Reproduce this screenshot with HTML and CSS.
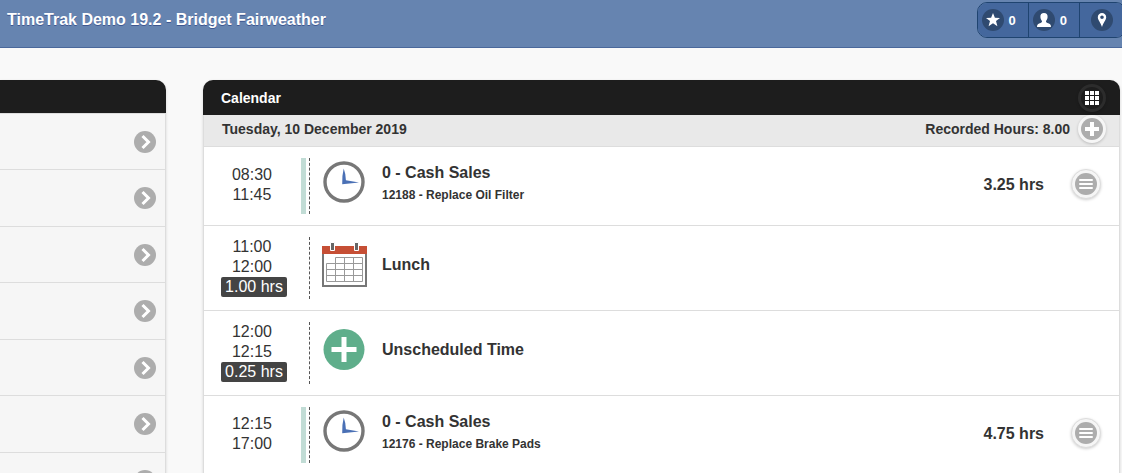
FILE: index.html
```html
<!DOCTYPE html>
<html lang="en">
<head>
    <meta charset="UTF-8">
    <meta name="viewport" content="width=device-width, initial-scale=1.0">
    <title>TimeTrak Demo 19.2</title>
    <link rel="stylesheet" href="styles.css">
</head>
<body>

<header class="topbar">
    <h1>TimeTrak Demo 19.2 - Bridget Fairweather</h1>
    <div class="top-buttons">
        <button type="button">
            <svg class="disc" viewBox="0 0 22 22"><path fill="#fff" d="M11 4l1.900 4.700 5.100.2-4 3.200 1.400 5.100-4.400-2.900-4.400 2.900L8 12.100 4 8.900l5.100-.2z"/></svg>
            <span>0</span>
        </button>
        <button type="button">
            <svg class="disc" viewBox="0 0 22 22"><path fill="#fff" d="M11 4c2.400 0 3.800 1.500 3.600 4.100-.1 1.700-.8 3.200-1.600 4 0 1 .2 1.400 1.400 1.900 2.300.9 3.600 1.200 3.600 4H4c0-2.800 1.300-3.100 3.600-4 1.200-.5 1.400-.9 1.400-1.900-.8-.8-1.500-2.300-1.600-4C7.200 5.500 8.600 4 11 4z"/></svg>
            <span>0</span>
        </button>
        <button type="button" aria-label="Location">
            <svg class="disc" viewBox="0 0 22 22"><path fill="#fff" fill-rule="evenodd" d="M11 4a4.200 4.200 0 0 1 4.200 4.200c0 2.600-2.600 5-4.200 9.800-1.600-4.800-4.200-7.200-4.200-9.800A4.200 4.200 0 0 1 11 4zm0 2.500a1.800 1.800 0 1 0 0 3.600 1.800 1.800 0 0 0 0-3.600z"/></svg>
        </button>
    </div>
</header>

<!-- shared icons -->
<svg class="defs" aria-hidden="true">
    <symbol id="chevron" viewBox="0 0 22 22">
        <circle cx="11" cy="11" r="11" fill="#adadad"/>
        <path d="M8.500 5l6 6-6 6" fill="none" stroke="#fff" stroke-width="3"/>
    </symbol>
    <symbol id="bars" viewBox="0 0 22 22">
        <circle cx="11" cy="11" r="11" fill="#adadad"/>
        <path d="M5 7h12M5 11h12M5 15h12" stroke="#fff" stroke-width="2" stroke-linecap="round"/>
    </symbol>
    <symbol id="clock" viewBox="0 0 48 48">
        <circle cx="24" cy="24" r="19" fill="#fff" stroke="#777" stroke-width="3.400"/>
        <path fill="#4a70b5" d="M23.700 10.500q2 5 2.200 11.700l13.100 2.400-16.800 1.700q-.4-8 1.500-15.800z"/>
    </symbol>
</svg>

<main class="content">
    <nav class="panel menu">
        <div class="panel-head"></div>
        <ul>
            <li><a href="#" aria-label="Open"><svg><use href="#chevron"/></svg></a></li>
            <li><a href="#" aria-label="Open"><svg><use href="#chevron"/></svg></a></li>
            <li><a href="#" aria-label="Open"><svg><use href="#chevron"/></svg></a></li>
            <li><a href="#" aria-label="Open"><svg><use href="#chevron"/></svg></a></li>
            <li><a href="#" aria-label="Open"><svg><use href="#chevron"/></svg></a></li>
            <li><a href="#" aria-label="Open"><svg><use href="#chevron"/></svg></a></li>
            <li><a href="#" aria-label="Open"><svg><use href="#chevron"/></svg></a></li>
        </ul>
    </nav>

    <section class="panel calendar">
        <div class="panel-head">
            <h2>Calendar</h2>
            <button type="button" class="round dark" aria-label="Grid">
                <svg viewBox="0 0 22 22"><path fill="#fff" d="M4 4h4v4H4zM9 4h4v4H9zM14 4h4v4h-4zM4 9h4v4H4zM9 9h4v4H9zM14 9h4v4h-4zM4 14h4v4H4zM9 14h4v4H9zM14 14h4v4h-4z"/></svg>
            </button>
        </div>
        <div class="day">
            <span>Tuesday, 10 December 2019</span>
            <span class="recorded">Recorded Hours: 8.00</span>
            <button type="button" class="round" aria-label="Add">
                <svg viewBox="0 0 22 22"><circle cx="11" cy="11" r="11" fill="#adadad"/><path d="M11 4v14M4 11h14" stroke="#fff" stroke-width="4"/></svg>
            </button>
        </div>

        <div class="entry">
            <div class="times"><span>08:30</span><span>11:45</span></div>
            <div class="line booked"></div>
            <svg class="icon"><use href="#clock"/></svg>
            <div class="info">
                <h3>0 - Cash Sales</h3>
                <p>12188 - Replace Oil Filter</p>
            </div>
            <span class="hours">3.25 hrs</span>
            <button type="button" class="round options" aria-label="Options"><svg><use href="#bars"/></svg></button>
        </div>

        <div class="entry">
            <div class="times"><span>11:00</span><span>12:00</span><span class="badge">1.00 hrs</span></div>
            <div class="line"></div>
            <svg class="icon" viewBox="0 0 48 48">
                <path fill="#fff" stroke="#777" stroke-width="2" d="M3 8h43v38H3z"/>
                <path fill="#c64f35" d="M2 6h45v8H2z"/>
                <path fill="#666" stroke="#fff" d="M10.500 2.500h4v8h-4zM34.500 2.500h4v8h-4z"/>
                <path fill="none" stroke="#999" d="M15.500 17.500h27v24h-36v-18h36M6.500 29.500h36M6.500 35.500h36M15.500 17.500v24M24.500 17.500v24M33.500 17.500v24"/>
            </svg>
            <div class="info"><h3>Lunch</h3></div>
        </div>

        <div class="entry">
            <div class="times"><span>12:00</span><span>12:15</span><span class="badge">0.25 hrs</span></div>
            <div class="line"></div>
            <svg class="icon" viewBox="0 0 48 48">
                <circle cx="24" cy="24.500" r="20.500" fill="#5fae8b"/>
                <path d="M24 12v25M11.500 24.500h25" stroke="#fff" stroke-width="5"/>
            </svg>
            <div class="info"><h3>Unscheduled Time</h3></div>
        </div>

        <div class="entry">
            <div class="times"><span>12:15</span><span>17:00</span></div>
            <div class="line booked"></div>
            <svg class="icon"><use href="#clock"/></svg>
            <div class="info">
                <h3>0 - Cash Sales</h3>
                <p>12176 - Replace Brake Pads</p>
            </div>
            <span class="hours">4.75 hrs</span>
            <button type="button" class="round options" aria-label="Options"><svg><use href="#bars"/></svg></button>
        </div>
    </section>
</main>

</body>
</html>
```

FILE: styles.css
```css
* {
    box-sizing: border-box;
}
body {
    margin: 0;
    background-color: #f9f9f9;
    color: #333;
    font-family: "Liberation Sans", Arial, sans-serif;
    font-size: 16px;
    line-height: 20px;
    overflow-x: hidden;
}
h1, h2, h3, p, ul {
    margin: 0;
    padding: 0;
}
button {
    font-family: inherit;
    cursor: pointer;
}
svg {
    display: block;
}
.defs {
    display: none;
}

/* top bar */
.topbar {
    display: flex;
    justify-content: space-between;
    align-items: center;
    padding: 2px 0 9px 7px;
    background-color: #6684b0;
    border-bottom: 1px solid #4a689b;
    overflow: hidden;
}
.topbar h1 {
    color: #fff;
    font-size: 16px;
    text-shadow: 0 1px 0 #3e5790;
}
.top-buttons {
    display: flex;
    margin-right: -4px;
    border: 1px solid #1f4470;
    border-radius: 10px;
    overflow: hidden;
}
.top-buttons button {
    display: flex;
    align-items: center;
    gap: 5px;
    height: 34px;
    padding: 0 12px 0 4px;
    border: none;
    border-right: 1px solid #1f4470;
    background-color: #44679d;
    color: #fff;
    font-size: 13px;
    font-weight: bold;
}
.top-buttons button:last-child {
    padding: 0 12px 0 11px;
    border-right: none;
}
.disc {
    width: 22px;
    height: 22px;
    border-radius: 50%;
    background-color: #2f4a70;
}

/* panels */
.content {
    display: grid;
    grid-template-columns: 166px 1fr;
    gap: 37px;
    padding: 32px 2px 0 0;
}
.panel {
    border: 1px solid #ddd;
    border-top: none;
    border-radius: 10px 10px 0 0;
    box-shadow: 0 1px 3px rgba(0, 0, 0, 0.15);
}
.panel-head {
    display: flex;
    justify-content: space-between;
    align-items: center;
    height: 35px;
    margin: 0 -1px;
    padding: 0 14px 0 18px;
    border-radius: 10px 10px 0 0;
    background-color: #1d1d1d;
    color: #fff;
}
.panel-head h2 {
    font-size: 14px;
}

/* side menu */
.menu {
    border-left: none;
    border-radius: 0 10px 0 0;
    background-color: #f6f6f6;
}
.menu .panel-head {
    height: 33px;
    border-radius: 0 10px 0 0;
}
.menu ul {
    list-style: none;
}
.menu a {
    display: flex;
    justify-content: flex-end;
    align-items: center;
    height: 56px;
    padding-right: 9px;
    border-top: 1px solid #ddd;
}
.menu li:nth-child(even) a {
    height: 57px;
}
.menu svg {
    width: 22px;
    height: 22px;
}

/* calendar */
.calendar {
    background-color: #fff;
}
.day {
    display: flex;
    align-items: center;
    height: 32px;
    padding: 0 13px 3px 18px;
    border-bottom: 1px solid #ddd;
    background-color: #e9e9e9;
    font-size: 14px;
    font-weight: bold;
}
.recorded {
    margin-left: auto;
    margin-right: 8px;
}
.round {
    display: flex;
    flex-shrink: 0;
    width: 28px;
    height: 28px;
    padding: 0;
    border: 3px solid #f6f6f6;
    border-radius: 50%;
    background-color: #f6f6f6;
    box-shadow: 0 1px 3px rgba(0, 0, 0, 0.2);
}
.round svg {
    width: 22px;
    height: 22px;
}
.round.dark {
    border-color: #2c2c2c;
    background-color: #1d1d1d;
}
.round.options {
    width: 30px;
    height: 30px;
    margin-bottom: 4px;
    padding: 3px;
    border: 1px solid #ddd;
}
.entry {
    display: flex;
    align-items: center;
    padding: 11px 18px 11px 17px;
    border-bottom: 1px solid #ddd;
}
.times {
    display: flex;
    flex-direction: column;
    width: 66px;
    padding-bottom: 2px;
    text-align: center;
}
.times span {
    padding-right: 4px;
}
.times .badge {
    padding: 0;
    border-radius: 2px;
    background-color: #444;
    color: #fff;
}
.line {
    align-self: stretch;
    width: 9px;
    min-height: 56px;
    margin: 0 10px 0 14px;
    border-right: 1px dashed #555;
}
.times:has(.badge) + .line {
    min-height: 62px;
}
.line.booked {
    background: linear-gradient(#c1dcd5, #c1dcd5) left / 5px 100% no-repeat;
}
.icon {
    width: 48px;
    height: 48px;
    margin-bottom: 8px;
}
.info {
    flex: 1;
    margin-left: 14px;
    padding-bottom: 6px;
}
.info h3 {
    font-size: 16px;
    line-height: 24px;
}
.info p {
    font-size: 12px;
    font-weight: bold;
}
.hours {
    margin-right: 27px;
    padding-bottom: 2px;
    font-weight: bold;
}
```
